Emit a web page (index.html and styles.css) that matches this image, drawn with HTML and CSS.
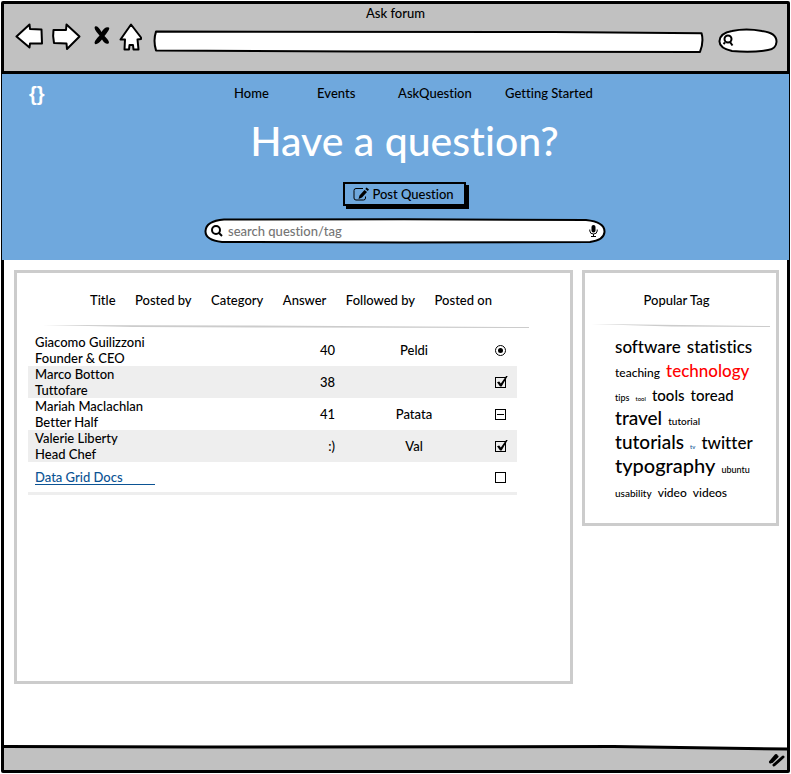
FILE: index.html
```html
<!DOCTYPE html>
<html lang="en">
<head>
<meta charset="utf-8">
<meta name="viewport" content="width=device-width, initial-scale=1">
<title>Ask forum</title>
<link rel="stylesheet" href="styles.css">
</head>
<body>
<div class="window">
  <header class="toolbar">
    <p class="toolbar-title">Ask forum</p>
    <div class="toolbar-row">
      <button class="icon-button" type="button" aria-label="Back">
        <svg width="28" height="28" viewBox="0 0 28 28"><path class="ink-fill" d="M1.500 13.500 14.500 1.500 15 6 26.500 6.500 27 20.500 15 20.500 14.500 24.500Z"/></svg>
      </button>
      <button class="icon-button" type="button" aria-label="Forward">
        <svg width="30" height="28" viewBox="0 0 30 28"><path class="ink-fill" d="M2.500 7 15 7 15.500 1.500 28.500 13.500 16 26 15.500 20.500 3 20 Q1.500 13 2.500 7Z"/></svg>
      </button>
      <button class="icon-button icon-stop" type="button" aria-label="Stop">
        <svg width="18" height="28" viewBox="0 0 18 28"><path d="M2 3.500Q5 2.500 8.500 9Q12 3 16 4.500Q17.500 5.500 11.500 13Q17.500 19 15.500 20.500Q12.500 22 9 16.500Q4.500 22 2 21Q0 19 6.500 12.500Q0 5.500 2 3.500Z"/></svg>
      </button>
      <button class="icon-button icon-home" type="button" aria-label="Home page">
        <svg width="24" height="28" viewBox="0 0 24 28"><path class="ink-fill" d="M12 1.500 22 14.500 22 16 18.500 16.500 19.500 26.500 14.500 26.500 14 22 10.500 22 10 26.500 5.500 26.500 6 16.500 1.500 16.500Z"/></svg>
      </button>
      <div class="address">
        <svg class="sketch" viewBox="0 0 550 22" preserveAspectRatio="none" aria-hidden="true"><path class="ink-fill" d="M3 1.500 400 2 547.500 3 Q550 11 546 21 L200 20.500 3 19.500 Q0 10 3 1.500Z"/></svg>
        <input class="bare" type="text" aria-label="Address">
      </div>
      <div class="quick">
        <svg class="sketch" viewBox="0 0 60 25" preserveAspectRatio="none" aria-hidden="true"><path class="ink-fill" d="M14 3Q28 0 44 3Q59 5 58.500 14Q58 21 50 22Q34 25 14 23Q1 20 1.500 13Q2 5 14 3Z"/></svg>
        <svg class="quick-icon" width="12" height="14" viewBox="0 0 12 14" aria-hidden="true"><circle cx="6" cy="5" r="3.500"/><path d="M3 8.500 1.500 10M8 8 10.500 11.500"/></svg>
        <input class="bare" type="search" aria-label="Web search">
      </div>
    </div>
  </header>

  <section class="hero">
    <div class="hero-top">
      <a class="logo" href="#" aria-label="Start">{}</a>
      <nav class="nav">
        <a href="#">Home</a>
        <a href="#">Events</a>
        <a href="#">AskQuestion</a>
        <a href="#">Getting Started</a>
      </nav>
    </div>
    <h1>Have a question?</h1>
    <button class="post" type="button">
      <svg width="17" height="14" viewBox="0 0 17 14" aria-hidden="true"><path class="thin" d="M10 1.500H3Q1 1.500 1 3.500V11Q1 13 3 13H10.500Q12.500 13 12.500 11V9.500"/><path d="M13.500.500 16 2.500 14.800 4 12.300 2ZM11.500 3 14 5 9 10.500 5.500 12 6.500 8.500Z"/></svg>
      Post Question
    </button>
    <form class="search">
      <svg class="sketch" viewBox="0 0 402 26" preserveAspectRatio="none" aria-hidden="true"><path class="ink-fill" d="M20 1.500 200 1.200 382 2Q401 4 400.500 14Q400 22 386 24L200 24.500 18 24Q1 22 1.500 13Q2 3 20 1.500Z"/></svg>
      <svg class="search-icon" width="12" height="12" viewBox="0 0 12 12" aria-hidden="true"><circle cx="5" cy="5" r="4"/><path d="M8 8 11 11"/></svg>
      <input class="bare" type="search" placeholder="search question/tag" aria-label="Search question or tag">
      <svg class="mic" width="9" height="12" viewBox="0 0 9 12" aria-hidden="true"><rect x="2.500" width="4" height="7.500" rx="2"/><path class="thin" d="M.8 4.500V6Q1 9 4.500 9T8.200 6V4.500M4.500 9V11.500M2 11.500H7"/></svg>
    </form>
  </section>

  <main class="content">
    <section class="panel questions">
      <table>
        <thead>
          <tr><th>Title</th><th>Posted by</th><th>Category</th><th>Answer</th><th>Followed by</th><th>Posted on</th></tr>
        </thead>
        <tbody>
          <tr><td>Giacomo Guilizzoni<br>Founder &amp; CEO</td><td>40</td><td>Peldi</td><td><input type="radio" aria-label="Giacomo Guilizzoni" checked></td></tr>
          <tr><td>Marco Botton<br>Tuttofare</td><td>38</td><td></td><td><input type="checkbox" aria-label="Marco Botton" checked></td></tr>
          <tr><td>Mariah Maclachlan<br>Better Half</td><td>41</td><td>Patata</td><td><input class="mixed" type="checkbox" aria-label="Mariah Maclachlan"></td></tr>
          <tr><td>Valerie Liberty<br>Head Chef</td><td>:)</td><td>Val</td><td><input type="checkbox" aria-label="Valerie Liberty" checked></td></tr>
          <tr><td><a class="docs" href="#">Data Grid Docs</a></td><td></td><td></td><td><input type="checkbox" aria-label="Data Grid Docs"></td></tr>
        </tbody>
      </table>
      <svg class="rule" viewBox="0 0 486 4" preserveAspectRatio="none" aria-hidden="true"><path d="M0 0 200 .5 486 2V3L240 2.500 90 2Z"/></svg>
    </section>

    <aside class="panel tags">
      <h2>Popular Tag</h2>
      <svg class="tag-rule" viewBox="0 0 178 4" preserveAspectRatio="none" aria-hidden="true"><path d="M0 0 90 1 178 2V3L80 2.500Z"/></svg>
      <ul>
        <li><a class="t6" href="#">software</a></li>
        <li><a class="t6" href="#">statistics</a></li>
        <li><a class="t4" href="#">teaching</a></li>
        <li><a class="t6 hot" href="#">technology</a></li>
        <li><a class="t2" href="#">tips</a></li>
        <li><a class="t1" href="#">tool</a></li>
        <li><a class="t5" href="#">tools</a></li>
        <li><a class="t5" href="#">toread</a></li>
        <li><a class="t7" href="#">travel</a></li>
        <li><a class="t3" href="#">tutorial</a></li>
        <li><a class="t7" href="#">tutorials</a></li>
        <li><a class="t1 cool" href="#">tv</a></li>
        <li><a class="t6" href="#">twitter</a></li>
        <li><a class="t8" href="#">typography</a></li>
        <li><a class="t2" href="#">ubuntu</a></li>
        <li><a class="t3" href="#">usability</a></li>
        <li><a class="t4" href="#">video</a></li>
        <li><a class="t4" href="#">videos</a></li>
      </ul>
    </aside>
  </main>

  <footer class="status">
    <svg class="status-edge" viewBox="0 0 784 6" preserveAspectRatio="none" aria-hidden="true"><path class="above" d="M0 0H784V4L610 1.500 0 1.500Z"/><path class="edge" d="M0 1.500 200 2 610 1.500 784 4"/></svg>
    <svg class="grip" width="18" height="14" viewBox="0 0 18 14" aria-hidden="true"><path d="M2.500 9 8 2.500M6 12 15 4M4 8.500 9 3.500"/></svg>
  </footer>
</div>
</body>
</html>
```
FILE: styles.css
```css
* {
  box-sizing: border-box;
}

body {
  margin: 0;
  background: #fff;
  color: #000;
  font-family: Lato, "Open Sans", sans-serif;
  font-size: 13px;
  font-weight: 500;
  font-variant-ligatures: none;
  line-height: 16px;
}

a {
  color: inherit;
  text-decoration: none;
}

button,
input {
  font: inherit;
  font-variant-ligatures: none;
  color: inherit;
}

svg {
  display: block;
}

.window {
  display: flex;
  flex-direction: column;
  min-height: calc(100vh - 2px);
  margin: 1px;
  border: 3px solid #000;
  border-radius: 2px;
}

.ink-fill {
  fill: #fff;
  stroke: #000;
  stroke-width: 2;
  stroke-linejoin: round;
  vector-effect: non-scaling-stroke;
}

.thin {
  fill: none;
  stroke: #000;
  stroke-width: 1;
}

.sketch {
  position: absolute;
  inset: 0;
  width: 100%;
  height: 100%;
}

.bare {
  position: relative;
  flex: 1;
  min-width: 0;
  padding: 0;
  border: 0;
  outline: 0;
  background: transparent;
  appearance: none;
}

/* Browser toolbar */

.toolbar {
  height: 70px;
  border-bottom: 3px solid #000;
  background: #c1c1c1;
}

.toolbar-title {
  margin: 0;
  padding-top: 1px;
  text-align: center;
}

.toolbar-row {
  display: flex;
  align-items: flex-start;
  padding: 2px 9px 0 11px;
}

.icon-button {
  flex: none;
  margin-right: 8px;
  padding: 0;
  border: 0;
  background: none;
}

.icon-stop {
  margin-left: 4px;
}

.icon-home {
  margin-right: 10px;
}

.address,
.quick {
  position: relative;
  display: flex;
}

.address {
  flex: 1;
  height: 23px;
  margin: 7px 14px 0 0;
  padding: 0 8px;
}

.quick {
  flex: none;
  width: 60px;
  height: 25px;
  margin-top: 5px;
  padding: 0 10px 0 4px;
  align-items: center;
}

.quick-icon {
  position: relative;
  fill: none;
  stroke: #000;
  stroke-width: 2;
}

/* Blue banner */

.hero {
  display: flex;
  flex-direction: column;
  align-items: center;
  height: 186px;
  margin: 0 -2px;
  background: #6fa8dd;
}

.hero-top {
  position: relative;
  display: flex;
  align-self: stretch;
  justify-content: center;
  padding: 11px 0 0 36px;
}

.logo {
  position: absolute;
  top: 8px;
  left: 27px;
  color: #fff;
  font-family: "Liberation Sans", sans-serif;
  font-size: 20px;
  font-weight: 700;
  line-height: 24px;
}

.nav {
  display: grid;
  grid-template-columns: 83px 81px 107px auto;
}

h1 {
  margin: 14px 0 0 18px;
  color: #fff;
  font-size: 41px;
  font-weight: 500;
  line-height: 52px;
}

.post {
  display: flex;
  align-items: center;
  gap: 2px;
  height: 24px;
  margin-top: 15px;
  margin-left: 18px;
  padding: 0 10px 0 8px;
  border: 2px solid #000;
  background: transparent;
  box-shadow: 3px 3px 0 #000;
}

.search {
  position: relative;
  display: flex;
  align-items: center;
  gap: 5px;
  width: 402px;
  max-width: 100%;
  height: 26px;
  margin-top: 12px;
  margin-left: 19px;
  padding: 0 8px 1px 7px;
}

.search-icon {
  position: relative;
  fill: none;
  stroke: #000;
  stroke-width: 2;
}

.search .bare::placeholder {
  color: #757575;
  opacity: 1;
}

.mic {
  position: relative;
}

/* Panels */

.content {
  display: flex;
  flex: 1;
  align-items: flex-start;
  gap: 9px;
  padding: 10px 8px 20px 10px;
}

.panel {
  border: 3px solid #ccc;
}

.questions {
  position: relative;
  flex: 1;
  height: 414px;
  padding: 0 53px 0 11px;
}

table,
thead,
tbody {
  display: block;
}

thead tr {
  display: flex;
  justify-content: space-between;
  height: 61px;
  padding: 19px 25px 0 62px;
}

th {
  padding: 0;
  font-weight: inherit;
  white-space: nowrap;
}

.rule {
  position: absolute;
  top: 52px;
  left: 26px;
  width: calc(100% - 67px);
  height: 4px;
  fill: #ccc;
}

tbody {
  border-bottom: 3px solid #eee;
}

tbody tr {
  display: grid;
  grid-template-columns: 187px 120px 1fr 33px;
  align-items: center;
  height: 32px;
}

tbody tr:nth-child(even) {
  background: #eee;
}

tbody tr:last-child {
  height: 30px;
}

td {
  padding: 0;
}

td:first-child {
  padding-left: 7px;
}

td:nth-child(2) {
  text-align: right;
}

td:nth-child(3) {
  padding-left: 9px;
  text-align: center;
}

.docs {
  display: block;
  width: 120px;
  border-bottom: 1px solid #0b5394;
  color: #0b5394;
  line-height: 14px;
}

td input {
  position: relative;
  display: block;
  width: 11px;
  height: 11px;
  margin: 0 0 0 11px;
  border: 1px solid #000;
  appearance: none;
}

td input[type="radio"] {
  border-radius: 50%;
}

td input[type="radio"]::after {
  position: absolute;
  inset: 2px;
  border-radius: 50%;
  background: #000;
  content: "";
}

td input[type="checkbox"]:checked::after {
  position: absolute;
  inset: -2px -3px 0 1px;
  background: #000;
  clip-path: polygon(0 62%, 20% 54%, 35% 72%, 86% 0, 100% 0, 42% 100%, 28% 100%);
  content: "";
}

.mixed::after {
  position: absolute;
  inset: 4px 1px;
  background: #000;
  content: "";
}

/* Tag cloud */

.tags {
  flex: none;
  width: 197px;
  height: 256px;
  padding: 0 6px;
}

.tags h2 {
  margin: 19px 8px 0 0;
  font-size: 13px;
  font-weight: inherit;
  line-height: 16px;
  text-align: center;
}

.tag-rule {
  width: 100%;
  height: 4px;
  margin-top: 16px;
  fill: #ccc;
}

.tags ul {
  width: 150px;
  margin: 7px 0 0 24px;
  padding: 0;
  font-size: 16px;
  line-height: 24px;
  list-style: none;
}

.tags li {
  display: inline;
  margin-right: 2px;
}

.tags li a {
  line-height: 0;
}

.t1 { font-size: 6px; }
.t2 { font-size: 9px; }
.t3 { font-size: 10px; }
.t4 { font-size: 12px; }
.t5 { font-size: 15px; }
.t6 { font-size: 17px; }
.t7 { font-size: 19px; }
.t8 { font-size: 20px; }

.hot { color: #f00; }
.cool { color: #0b5394; }

/* Status bar */

.status {
  position: relative;
  display: flex;
  align-items: center;
  justify-content: flex-end;
  height: 24px;
  padding: 4px 1px 0;
  background: #c1c1c1;
}

.status-edge {
  position: absolute;
  top: -1px;
  left: 0;
  width: 100%;
  height: 6px;
}

.above {
  fill: #fff;
}

.edge {
  fill: none;
  stroke: #000;
  stroke-width: 3;
}

.grip {
  fill: none;
  stroke: #000;
  stroke-width: 3;
  stroke-linecap: round;
}
```
